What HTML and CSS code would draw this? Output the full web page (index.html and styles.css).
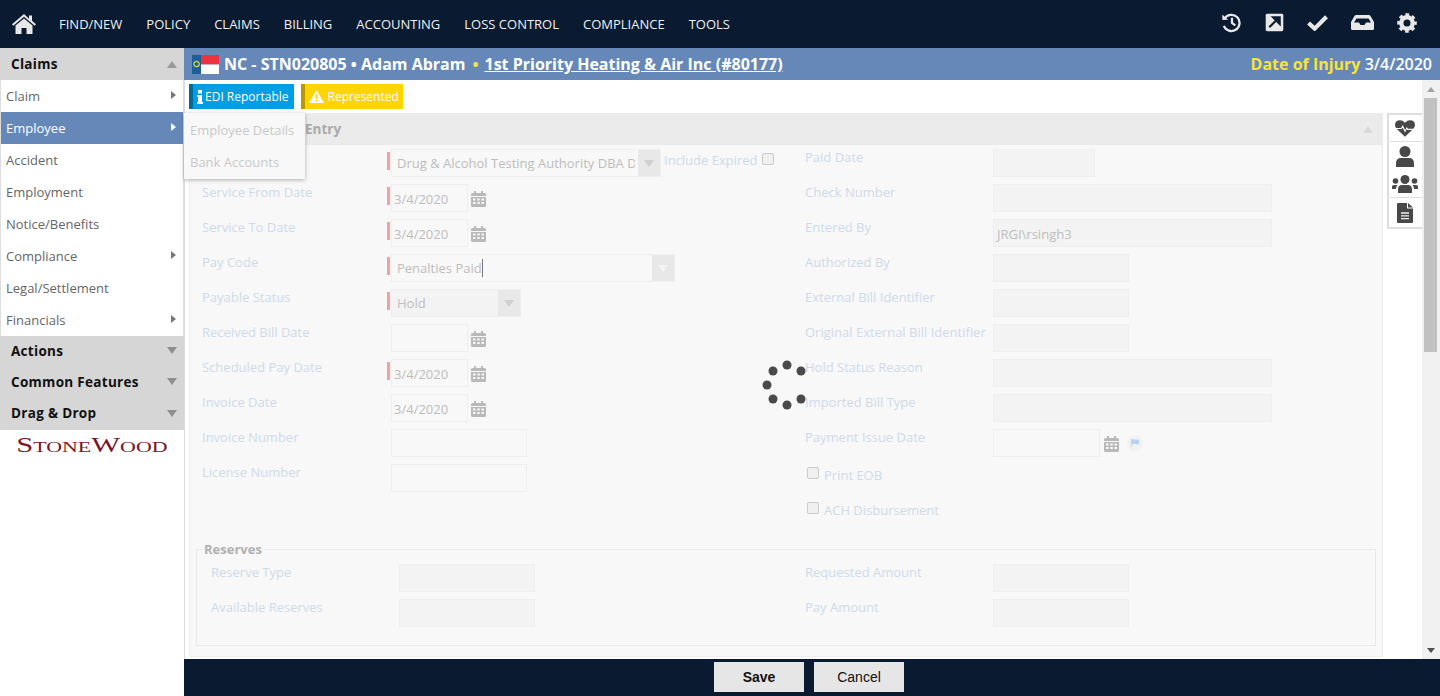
FILE: index.html
```html
<!DOCTYPE html>
<html lang="en">

<head>
    <meta charset="UTF-8" />
    <title>Claim Payment Entry</title>
    <link rel="stylesheet" href="styles.css">
</head>

<body>
    <svg class="defs" width="0" height="0">
        <symbol id="calendar" viewBox="0 0 15 16">
            <path d="M0 3.5q0-1.5 1.5-1.5H3V0h2v2h5V0h2v2h1.500q1.500 0 1.500 1.500V5H0zM0 6h15v8.500q0 1.500-1.500 1.500h-12Q0 16 0 14.500zm2 1.500v2h2.500v-2zm4.250 0v2h2.500v-2zm4.250 0v2H13v-2zM2 11v2h2.500v-2zm4.250 0v2h2.500v-2zm4.250 0v2H13v-2z" fill-rule="evenodd" />
        </symbol>
    </svg>

    <div class="app">
        <header class="topbar">
            <a class="home">
                <svg width="24" height="20" viewBox="0 0 24 20">
                    <path d="M12 0 0 10.200l1.300 1.500L12 2.800l10.700 8.900 1.300-1.500-4-3.400V1.500h-3v3.300z" fill="#e8e8e8" />
                    <path d="M12 4.500 3.500 11.500V20h6v-6h5v6h6v-8.500z" fill="#e8e8e8" />
                </svg>
            </a>
            <nav class="topnav">
                <a>FIND/NEW</a>
                <a>POLICY</a>
                <a>CLAIMS</a>
                <a>BILLING</a>
                <a>ACCOUNTING</a>
                <a>LOSS CONTROL</a>
                <a>COMPLIANCE</a>
                <a>TOOLS</a>
            </nav>
            <div class="top-icons">
                <svg width="21" height="21" viewBox="0 0 22 22" fill="none" stroke="#e8e8e8" stroke-width="2.400">
                    <path d="M4 6.500a8.500 8.500 0 1 1-1 8" />
                    <path d="M1.200 2.500 1.500 8.500l6-.3z" fill="#e8e8e8" stroke="none" />
                    <path d="M11.500 6v5.500l3.500 2.500" />
                </svg>
                <svg width="19" height="19" viewBox="0 0 20 20">
                    <rect width="18.500" height="18.500" x=".75" y=".75" rx="1.500" fill="#e8e8e8" />
                    <path d="M4.500 15 12.500 7M8.500 4.500h7v7z" stroke="#0a1a30" stroke-width="2.200" fill="#0a1a30" />
                </svg>
                <svg width="21" height="17" viewBox="0 0 22 18">
                    <path d="M1.500 9.500 8 15.500 20.500 3" fill="none" stroke="#e8e8e8" stroke-width="4.400" />
                </svg>
                <svg class="inbox" width="23" height="15" viewBox="0 0 23 15">
                    <path d="M5 0h13q1 0 1.500 1L23 7v6.500q0 1.500-1.500 1.500h-20Q0 15 0 13.500V7l3.500-6Q4 0 5 0zm.500 3.500L3 7.500h5l1.500 2.500h4L15 7.500h5l-2.500-4z" fill="#e8e8e8" fill-rule="evenodd" />
                </svg>
                <svg width="20" height="20" viewBox="0 0 22 22">
                    <circle cx="11" cy="11" r="6.300" fill="none" stroke="#e8e8e8" stroke-width="4.800" />
                    <circle cx="11" cy="11" r="9" fill="none" stroke="#e8e8e8" stroke-width="3.600" stroke-dasharray="3.900 3.170" stroke-dashoffset="1.950" />
                </svg>
            </div>
        </header>

        <div class="below">
            <aside class="sidebar">
                <div class="acc-head">Claims<span class="tri tri-up"></span></div>
                <ul class="side-menu">
                    <li class="has-sub">Claim</li>
                    <li class="has-sub active">Employee</li>
                    <li>Accident</li>
                    <li>Employment</li>
                    <li>Notice/Benefits</li>
                    <li class="has-sub">Compliance</li>
                    <li>Legal/Settlement</li>
                    <li class="has-sub">Financials</li>
                </ul>
                <div class="acc-group">
                    <div class="acc-head small">Actions<span class="tri"></span></div>
                    <div class="acc-head small">Common Features<span class="tri"></span></div>
                    <div class="acc-head small">Drag &amp; Drop<span class="tri"></span></div>
                </div>
                <div class="logo"><span>StoneWood</span></div>
            </aside>

            <main class="main">
                <div class="titlebar">
                    <svg class="flag" width="27" height="19" viewBox="0 0 27 19">
                        <rect width="27" height="9.500" fill="#ee3340" />
                        <rect y="9.500" width="27" height="9.500" fill="#fff" />
                        <rect width="9" height="19" fill="#1f5f99" />
                        <circle cx="4.500" cy="9" r="2.700" fill="none" stroke="#e6d43c" stroke-width="1.200" />
                    </svg>
                    <span class="claim-name">NC - STN020805 • Adam Abram</span>
                    <span class="dot">•</span>
                    <a class="insured">1st Priority Heating &amp; Air Inc (#80177)</a>
                    <span class="injury"><b>Date of Injury</b> 3/4/2020</span>
                </div>

                <div class="work">
                    <div class="content">
                        <div class="badges">
                            <span class="badge blue">
                                <svg width="6" height="14" viewBox="0 0 6 14" fill="#fff"><rect x="1" width="4" height="3.500" /><path d="M0 5h5v7h1v2H0v-2h1V7H0z" /></svg>
                                EDI Reportable
                            </span>
                            <span class="badge yellow">
                                <svg width="15" height="13" viewBox="0 0 15 13"><path d="M7.500 0 15 13H0z" fill="#fff" /><rect x="6.700" y="4" width="1.600" height="5" fill="#ffd500" /><rect x="6.700" y="10" width="1.600" height="1.700" fill="#ffd500" /></svg>
                                Represented
                            </span>
                        </div>

                        <section class="panel">
                            <div class="panel-head">Entry<span class="tri tri-up faint"></span></div>
                            <div class="panel-body">
                                <div class="form-grid">
                                    <div class="col">
                                        <div class="row">
                                            <label class="lbl"></label>
                                            <div class="field req">
                                                <div class="combo w270 flat"><span class="combo-text">Drug &amp; Alcohol Testing Authority DBA D</span><span class="combo-btn"></span></div>
                                                <span class="inline-lbl">Include Expired</span>
                                                <span class="check inline-check"></span>
                                            </div>
                                        </div>
                                        <div class="row">
                                            <label class="lbl">Service From Date</label>
                                            <div class="field req"><div class="inp w77">3/4/2020</div><svg class="cal"><use href="#calendar" /></svg></div>
                                        </div>
                                        <div class="row">
                                            <label class="lbl">Service To Date</label>
                                            <div class="field req"><div class="inp w77">3/4/2020</div><svg class="cal"><use href="#calendar" /></svg></div>
                                        </div>
                                        <div class="row">
                                            <label class="lbl">Pay Code</label>
                                            <div class="field req">
                                                <div class="combo w284"><span class="combo-text"><span class="caret">Penalties Paid</span></span><span class="combo-btn teal"></span></div>
                                            </div>
                                        </div>
                                        <div class="row">
                                            <label class="lbl">Payable Status</label>
                                            <div class="field req">
                                                <div class="combo w130 ro"><span class="combo-text">Hold</span><span class="combo-btn"></span></div>
                                            </div>
                                        </div>
                                        <div class="row">
                                            <label class="lbl">Received Bill Date</label>
                                            <div class="field"><div class="inp w77"></div><svg class="cal"><use href="#calendar" /></svg></div>
                                        </div>
                                        <div class="row">
                                            <label class="lbl">Scheduled Pay Date</label>
                                            <div class="field req"><div class="inp w77">3/4/2020</div><svg class="cal"><use href="#calendar" /></svg></div>
                                        </div>
                                        <div class="row">
                                            <label class="lbl">Invoice Date</label>
                                            <div class="field"><div class="inp w77">3/4/2020</div><svg class="cal"><use href="#calendar" /></svg></div>
                                        </div>
                                        <div class="row">
                                            <label class="lbl">Invoice Number</label>
                                            <div class="field"><div class="inp w136"></div></div>
                                        </div>
                                        <div class="row">
                                            <label class="lbl">License Number</label>
                                            <div class="field"><div class="inp w136"></div></div>
                                        </div>
                                    </div>

                                    <div class="col right">
                                        <div class="row"><label class="lbl">Paid Date</label><div class="inp ro w102"></div></div>
                                        <div class="row"><label class="lbl">Check Number</label><div class="inp ro w279"></div></div>
                                        <div class="row"><label class="lbl">Entered By</label><div class="inp ro w279">JRGI\rsingh3</div></div>
                                        <div class="row"><label class="lbl">Authorized By</label><div class="inp ro w136"></div></div>
                                        <div class="row"><label class="lbl">External Bill Identifier</label><div class="inp ro w136"></div></div>
                                        <div class="row"><label class="lbl">Original External Bill Identifier</label><div class="inp ro w136"></div></div>
                                        <div class="row"><label class="lbl">Hold Status Reason</label><div class="inp ro w279"></div></div>
                                        <div class="row"><label class="lbl">Imported Bill Type</label><div class="inp ro w279"></div></div>
                                        <div class="row">
                                            <label class="lbl">Payment Issue Date</label>
                                            <div class="inp w107"></div>
                                            <svg class="cal"><use href="#calendar" /></svg>
                                            <span class="flag-btn">
                                                <svg width="8" height="8" viewBox="0 0 8 8"><path d="M0 0h1v8H0zM1 .5q1.500-.7 3 0t4 0v4.500q-2.500.7-4 0t-3 0z" fill="#b5d3f3" /></svg>
                                            </span>
                                        </div>
                                        <div class="row check-row"><span class="check"></span>Print EOB</div>
                                        <div class="row check-row"><span class="check"></span>ACH Disbursement</div>
                                    </div>
                                </div>

                                <fieldset class="reserves">
                                    <legend>Reserves</legend>
                                    <div class="res-grid">
                                        <div class="row"><label class="lbl">Reserve Type</label><div class="inp ro w136"></div></div>
                                        <div class="row"><label class="lbl">Requested Amount</label><div class="inp ro w136"></div></div>
                                        <div class="row"><label class="lbl">Available Reserves</label><div class="inp ro w136"></div></div>
                                        <div class="row"><label class="lbl">Pay Amount</label><div class="inp ro w136"></div></div>
                                    </div>
                                </fieldset>
                            </div>
                        </section>
                    </div>

                    <div class="rail">
                        <div class="rail-item">
                            <svg width="20" height="17" viewBox="0 0 22 18">
                                <path d="M11 18 2 9.500Q0 7.500 0 5.200 0 0 5.500 0 8.500 0 11 2.700 13.500 0 16.500 0 22 0 22 5.200q0 2.300-2 4.300z" fill="#484848" />
                                <path d="M0 9h7l1.500-2.500L11 12l2-3.500 1 1.500h8" fill="none" stroke="#f8f8f8" stroke-width="1.300" />
                            </svg>
                        </div>
                        <div class="rail-item">
                            <svg width="18" height="21" viewBox="0 0 18 21" fill="#484848"><circle cx="9" cy="5.500" r="5.500" /><path d="M0 21v-3.500Q0 12 5 12h8q5 0 5 5.500V21z" /></svg>
                        </div>
                        <div class="rail-item">
                            <svg width="26" height="18" viewBox="0 0 26 18" fill="#484848"><circle cx="13" cy="4.500" r="4.500" /><circle cx="3.500" cy="6" r="2.800" /><circle cx="22.500" cy="6" r="2.800" /><path d="M6 18v-3.500Q6 10 10 10h6q4 0 4 4.500V18zM0 14v-2.500Q0 10 2 10h3.500q-1.500 1.500-1.500 4zM26 14v-2.500q0-1.500-2-1.500h-3.500q1.500 1.500 1.500 4z" /></svg>
                        </div>
                        <div class="rail-item">
                            <svg width="16" height="20" viewBox="0 0 16 20"><path d="M0 1q0-1 1-1h9v5.500h6V19q0 1-1 1H1q-1 0-1-1z" fill="#484848" /><path d="M11 0l5 4.500h-5z" fill="#484848" /><path d="M4 10h8M4 12.800h8M4 15.600h8" stroke="#f2f2f2" stroke-width="1.300" /></svg>
                        </div>
                    </div>

                    <div class="scrollbar">
                        <span class="sb-arrow up"></span>
                        <div class="sb-track"><div class="sb-thumb"></div></div>
                        <span class="sb-arrow down"></span>
                    </div>
                </div>

                <footer class="actions">
                    <button class="btn primary" type="button">Save</button>
                    <button class="btn" type="button">Cancel</button>
                </footer>
            </main>
        </div>
    </div>

    <!-- submenu and spinner sit over the page -->
    <div class="flyout">
        <a>Employee Details</a>
        <a>Bank Accounts</a>
    </div>

    <svg class="spinner" width="50" height="50" viewBox="0 0 50 50" fill="#4a4a4a">
        <circle cx="25" cy="5" r="4.500" />
        <circle cx="11" cy="11" r="4.500" />
        <circle cx="39" cy="11" r="4.500" />
        <circle cx="5" cy="25" r="4.500" />
        <circle cx="11" cy="39" r="4.500" />
        <circle cx="39" cy="39" r="4.500" />
        <circle cx="25" cy="45" r="4.500" />
    </svg>
</body>

</html>
```

FILE: styles.css
```css
* {
    box-sizing: border-box;
}

html,
body {
    margin: 0;
    height: 100%;
    overflow: hidden;
}

body {
    font-family: "Open Sans", sans-serif;
    font-size: 13px;
    color: #333;
    background: white;
}

.defs {
    position: absolute;
}

.app {
    display: flex;
    flex-direction: column;
    height: 696px;
}

/* top bar */

.topbar {
    display: flex;
    align-items: center;
    flex: 0 0 48px;
    background: #0a1a30;
    padding-left: 12px;
}

.home {
    display: flex;
    margin-right: 23px;
    margin-top: -1px;
}

.topnav {
    display: flex;
    gap: 24px;
}

.topnav a {
    color: #f0f0f0;
    font-size: 13px;
}

.top-icons {
    display: flex;
    align-items: center;
    gap: 23px;
    margin-left: auto;
    padding-right: 23px;
    margin-top: -3px;
}

.below {
    display: flex;
    flex: 1;
    min-height: 0;
}

/* left menu */

.sidebar {
    flex: 0 0 184px;
    background: white;
    box-shadow: 1px 0 0 #ddd;
}

.acc-head {
    display: flex;
    align-items: center;
    justify-content: space-between;
    height: 32px;
    padding: 0 7px 0 11px;
    background: #d6d6d6;
    color: #111;
    font-weight: 700;
    font-size: 13.5px;
    letter-spacing: 0.3px;
}

.acc-head.small {
    height: 31px;
    padding-bottom: 2px;
}

.acc-group .acc-head:last-child {
    height: 32px;
}

.tri {
    width: 0;
    height: 0;
    border-left: 5px solid transparent;
    border-right: 5px solid transparent;
    border-top: 7px solid #8f8f8f;
}

.tri-up {
    border-top: 0;
    border-bottom: 7px solid #9a9a9a;
}

.tri-up.faint {
    border-bottom-color: #d8d8d8;
    margin-right: 2px;
}

.side-menu {
    list-style: none;
    margin: 0;
    padding: 0;
    border-left: 1px solid #ddd;
    border-right: 1px solid #ddd;
}

.side-menu li {
    position: relative;
    height: 32px;
    line-height: 33px;
    padding-left: 5px;
    color: #666;
}

.side-menu li.active {
    background: #6688b8;
    color: white;
}

.side-menu li.has-sub::after {
    content: "";
    position: absolute;
    right: 7px;
    top: 11px;
    border-top: 4px solid transparent;
    border-bottom: 4px solid transparent;
    border-left: 5px solid #777;
}

.side-menu li.active::after {
    border-left-color: white;
}

.logo {
    margin-top: 2px;
    text-align: center;
    font-family: "Liberation Serif", serif;
    font-variant: small-caps;
    font-size: 21px;
    line-height: 26px;
    color: #7a1626;
}

.logo span {
    display: inline-block;
    transform: scaleX(1.46);
}

/* main */

.main {
    display: flex;
    flex-direction: column;
    flex: 1;
    min-width: 0;
}

.titlebar {
    display: flex;
    align-items: center;
    flex: 0 0 32px;
    background: #6688b8;
    padding: 0 8px;
    color: white;
    font-weight: 700;
    font-size: 16px;
}

.flag {
    margin-right: 5px;
}

.dot {
    color: #f5e43a;
    margin: 0 6px 0 7px;
}

.insured {
    text-decoration: underline;
}

.injury {
    margin-left: auto;
    font-weight: 600;
}

.injury b {
    color: #f5e43a;
    font-weight: 700;
}

.work {
    display: flex;
    flex: 1;
    min-height: 0;
}

.content {
    flex: 0 0 1203px;
    padding: 4px 0 0 5px;
}

.badges {
    display: flex;
    gap: 7px;
    height: 25px;
    margin-bottom: 4px;
}

.badge {
    display: flex;
    align-items: center;
    gap: 2px;
    padding: 0 4px;
    color: white;
    font-size: 12px;
    border-left: 4px solid;
}

.badge.blue {
    background: #009fe3;
    border-color: #006a9a;
    padding-right: 5px;
}

.badge.yellow {
    background: #ffd500;
    border-color: #b89a00;
    gap: 4px;
}

.panel {
    width: 1194px;
    height: 544px;
    background: #f8f8f8;
    border: 1px solid #eee;
    border-top: 0;
}

.panel-head {
    display: flex;
    align-items: center;
    justify-content: space-between;
    height: 32px;
    padding: 0 8px 0 116px;
    margin: 0 -1px;
    background: #ebebeb;
    color: #aaa;
    font-weight: 700;
    font-size: 13.5px;
}

.panel-body {
    padding: 4px 6px 0;
}

.form-grid {
    display: grid;
    grid-template-columns: 603px 1fr;
    padding-left: 6px;
}

.col {
    display: flex;
    flex-direction: column;
    gap: 7px;
}

.row {
    display: flex;
    height: 28px;
}

.lbl {
    flex: 0 0 185px;
    line-height: 17px;
    color: #cfdaea;
}

.right .lbl {
    flex-basis: 188px;
}

.field {
    display: flex;
    padding-left: 4px;
}

.field.req {
    padding-left: 0;
}

.field.req::before {
    content: "";
    flex: 0 0 3px;
    height: 18px;
    margin: 3px 1px 0 0;
    background: #f4a0a0;
}

.inp {
    height: 28px;
    line-height: 28px;
    padding-left: 2px;
    border: 1px solid #efefef;
    color: #bdbdbd;
}

.inp.ro {
    background: #f3f3f3;
    padding-left: 3px;
}

.w77 {
    width: 77px;
}

.w102 {
    width: 102px;
}

.w107 {
    width: 107px;
}

.w130 {
    width: 130px;
}

.w136 {
    width: 136px;
}

.w270 {
    width: 270px;
}

.w279 {
    width: 279px;
}

.w284 {
    width: 284px;
}

.cal {
    width: 15px;
    height: 16px;
    margin: 7px 0 0 3px;
    fill: #b9b9b9;
}

.right .cal {
    margin-left: 4px;
}

.combo {
    display: flex;
    height: 28px;
    line-height: 26px;
    border: 1px solid #efefef;
    color: #bdbdbd;
}

.combo.ro {
    background: #f3f3f3;
}

.combo-text {
    flex: 1;
    min-width: 0;
    margin-right: 3px;
    margin-left: 5px;
    white-space: nowrap;
    overflow: hidden;
}

.caret {
    display: inline-block;
    line-height: 18px;
    border-right: 1px solid #777;
}

.combo-btn {
    display: flex;
    align-items: center;
    justify-content: center;
    flex: 0 0 22px;
    background: #e8e8e8;
}

.combo-btn::after {
    content: "";
    border-left: 5px solid transparent;
    border-right: 5px solid transparent;
    border-top: 7px solid #d0d0d0;
}

.combo-btn.teal::after {
    border-top-color: #f5f5f5;
}

.inline-lbl {
    margin-left: 3px;
    line-height: 23px;
    color: #cfdaea;
}

.check {
    display: inline-block;
    flex: 0 0 12px;
    width: 12px;
    height: 12px;
    border: 1px solid #ccc;
    border-radius: 2px;
    background: #f0f0f0;
}

.inline-check {
    margin: 4px 0 0 4px;
}

.check-row {
    color: #cfdaea;
    line-height: 17px;
    gap: 5px;
    padding: 3px 0 0 2px;
}

.flag-btn {
    display: flex;
    align-items: center;
    justify-content: center;
    width: 16px;
    height: 16px;
    margin: 6px 0 0 8px;
    border-radius: 50%;
    background: #f2f2f2;
}

.reserves {
    margin: 14px 0 0;
    height: 105px;
    padding: 6px 0 0 14px;
    border: 1px solid #e9e9e9;
    min-width: 0;
    width: 1180px;
}

.reserves legend {
    padding: 0 1px;
    margin-left: -8px;
    font-size: 13px;
    font-weight: 700;
    line-height: 17px;
    color: #b0b0b0;
}

.res-grid {
    display: grid;
    grid-template-columns: 594px 1fr;
    row-gap: 7px;
}

.res-grid .row .lbl {
    flex-basis: 188px;
}

/* right hand icons */

.rail {
    align-self: flex-start;
    flex: 0 0 35px;
    height: 116px;
    margin-top: 33px;
    border: 2px solid #dedede;
    border-right: 0;
}

.rail-item {
    display: flex;
    align-items: center;
    justify-content: center;
    margin-left: 1px;
    padding-right: 2px;
    background: white;
}

.rail-item:nth-child(1) {
    height: 27px;
    border-bottom: 1px solid #dedede;
}

.rail-item:nth-child(2) {
    height: 28px;
}

.rail-item:nth-child(3) {
    height: 28px;
    border-bottom: 1px solid #dedede;
}

.rail-item:nth-child(4) {
    height: 29px;
}

.scrollbar {
    display: flex;
    flex-direction: column;
    align-items: center;
    flex: 0 0 18px;
    background: #f1f1f1;
}

.sb-arrow {
    margin-top: 7px;
    width: 0;
    height: 0;
    border-left: 4px solid transparent;
    border-right: 4px solid transparent;
}

.sb-arrow.up {
    border-bottom: 5px solid #a3a3a3;
    margin-bottom: 6px;
}

.sb-arrow.down {
    border-top: 5px solid #505050;
    margin: 0 0 6px;
}

.sb-track {
    flex: 1;
    width: 100%;
    padding: 0 3px 0 2px;
}

.sb-thumb {
    height: 254px;
    background: #c1c1c1;
}

/* bottom bar */

.actions {
    display: flex;
    justify-content: center;
    gap: 10px;
    flex: 0 0 37px;
    padding: 3px 6px 0 0;
    background: #0a1a30;
}

.btn {
    width: 90px;
    height: 30px;
    border: 0;
    background: #e6e6e6;
    color: #111;
    font-family: "Liberation Sans", Arial, sans-serif;
    font-size: 14px;
}

.btn.primary {
    font-weight: 700;
}

/* overlays */

.flyout {
    position: absolute;
    left: 184px;
    top: 113px;
    width: 121px;
    height: 66px;
    background: #f8f8f8;
    box-shadow: 0 1px 4px rgba(0, 0, 0, 0.3);
}

.flyout a {
    display: block;
    height: 32px;
    line-height: 34px;
    padding-left: 6px;
    color: #c9c9c9;
}

.spinner {
    position: absolute;
    left: 762px;
    top: 360px;
}
```
